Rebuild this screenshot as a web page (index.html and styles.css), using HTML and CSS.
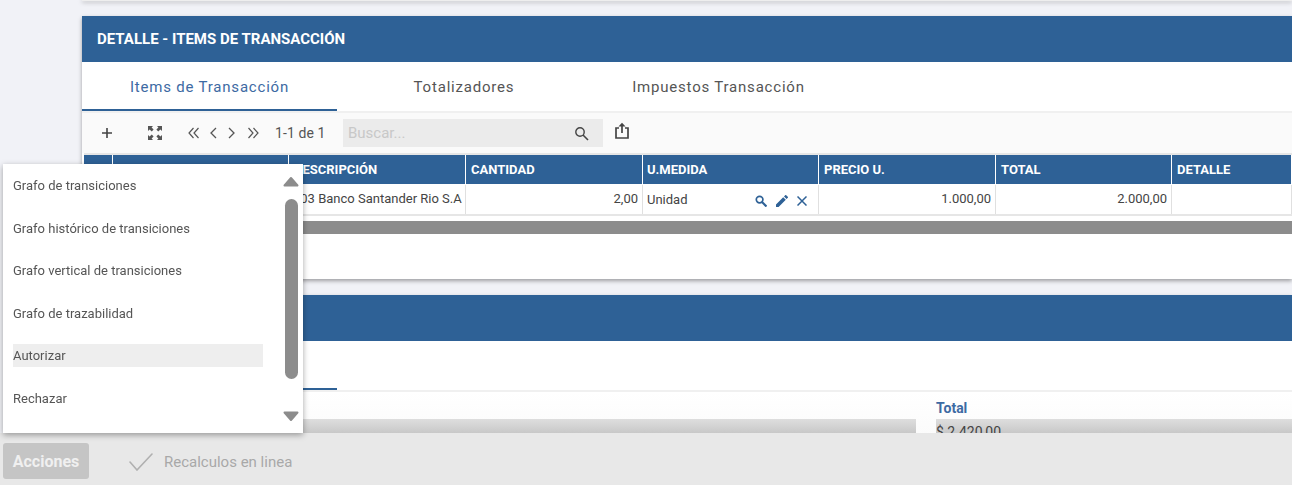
FILE: index.html
```html
<!DOCTYPE html>
<html lang="en">
<head>
    <meta charset="UTF-8">
    <title>Detalle de transacción</title>
    <link rel="stylesheet" href="styles.css">
</head>
<body>
    <div class="top-card"></div>
    <div class="content">
        <section class="panel first-panel">
            <h2 class="panel-title">DETALLE - ITEMS DE TRANSACCIÓN</h2>
            <div class="tabs">
                <a class="tab active">Items de Transacción</a>
                <a class="tab">Totalizadores</a>
                <a class="tab">Impuestos Transacción</a>
            </div>
            <div class="toolbar">
                <svg class="tool-add" width="12" height="12" viewBox="0 0 12 12"><path d="M6 1v10M1 6h10" stroke="#444" stroke-width="1.6" fill="none"/></svg>
                <svg class="tool-expand" width="16" height="16" viewBox="0 0 16 16"><path d="M1 6V1h5L4.600 2.400 6.600 4.600 4.800 6.400 2.600 4.400zM15 6V1h-5l1.400 1.400-2 2.200 1.800 1.800 2.200-2zM1 10v5h5l-1.400-1.400 2-2.200-1.800-1.800-2.200 2zM15 10v5h-5l1.400-1.400-2-2.200 1.800-1.800 2.200 2z" fill="#555"/></svg>
                <svg class="tool-first" width="12" height="12" viewBox="0 0 12 12"><path d="M5.500 1 1 6l4.500 5M10.500 1 6 6l4.500 5" stroke="#555" stroke-width="1.200" fill="none"/></svg>
                <svg class="tool-prev" width="8" height="12" viewBox="0 0 8 12"><path d="M7 1 2 6l5 5" stroke="#555" stroke-width="1.300" fill="none"/></svg>
                <svg class="tool-next" width="8" height="12" viewBox="0 0 8 12"><path d="M1 1l5 5-5 5" stroke="#555" stroke-width="1.300" fill="none"/></svg>
                <svg class="tool-last" width="12" height="12" viewBox="0 0 12 12"><path d="M1.500 1 6 6l-4.500 5M6.500 1 11 6l-4.500 5" stroke="#555" stroke-width="1.200" fill="none"/></svg>
                <span class="page-count">1-1 de 1</span>
                <div class="search">
                    <span>Buscar...</span>
                    <svg width="15" height="15" viewBox="0 0 15 15"><circle cx="6" cy="6" r="4.200" stroke="#444" stroke-width="1.400" fill="none"/><path d="M9 9l5 5" stroke="#444" stroke-width="1.600"/></svg>
                </div>
                <svg class="tool-share" width="14" height="17" viewBox="0 0 14 17"><path d="M4 6H1v10h12V6h-3" stroke="#444" stroke-width="1.700" fill="none"/><path d="M7 11V2" stroke="#444" stroke-width="1.700"/><path d="M3.500 4.500 7 .8l3.500 3.700z" fill="#444"/></svg>
            </div>
            <div class="grid-head">
                <div></div>
                <div></div>
                <div>DESCRIPCIÓN</div>
                <div>CANTIDAD</div>
                <div class="unit-head">U.MEDIDA</div>
                <div>PRECIO U.</div>
                <div>TOTAL</div>
                <div>DETALLE</div>
            </div>
            <div class="grid-row">
                <div></div>
                <div></div>
                <div class="clip">003 Banco Santander Rio S.A</div>
                <div class="num">2,00</div>
                <div class="unit-cell">
                    <span>Unidad</span>
                    <span class="row-icons">
                        <svg width="12" height="12" viewBox="0 0 12 12"><circle cx="4.600" cy="4.600" r="3.300" stroke="#2e6196" stroke-width="1.700" fill="none"/><path d="M7 7l4.500 4.500" stroke="#2e6196" stroke-width="2.200"/></svg>
                        <svg width="12" height="12" viewBox="0 0 12 12"><path d="M0 12V9.400L7.200 2.200l2.600 2.600L2.600 12zM8 1.400 9.200.2a.7.7 0 0 1 1 0l1.600 1.600a.7.7 0 0 1 0 1L10.600 4z" fill="#2e6196"/></svg>
                        <svg width="10" height="10" viewBox="0 0 10 10"><path d="M.5.5l9 9M9.500.5l-9 9" stroke="#2e6196" stroke-width="1.500"/></svg>
                    </span>
                </div>
                <div class="num">1.000,00</div>
                <div class="num">2.000,00</div>
                <div></div>
            </div>
            <div class="grid-scroll"></div>
        </section>

        <section class="panel second-panel">
            <div class="panel-title empty"></div>
            <div class="tabs">
                <a class="tab active"></a>
            </div>
            <div class="totals">
                <div class="total-col wide"><div class="total-field"></div></div>
                <div class="total-col">
                    <label>Total</label>
                    <div class="total-field">$ 2.420,00</div>
                </div>
            </div>
        </section>
    </div>

    <div class="bottom-bar">
        <button class="btn-actions">Acciones</button>
        <svg class="check" width="24" height="18" viewBox="0 0 24 18"><path d="M1 9l7 8L23 1" stroke="#b0b0b0" stroke-width="1.600" stroke-linecap="round" fill="none"/></svg>
        <span class="recalc">Recalculos en linea</span>
    </div>

    <div class="actions-menu">
        <ul class="menu-list">
            <li>Grafo de transiciones</li>
            <li>Grafo histórico de transiciones</li>
            <li>Grafo vertical de transiciones</li>
            <li>Grafo de trazabilidad</li>
            <li class="selected">Autorizar</li>
            <li>Rechazar</li>
        </ul>
        <div class="menu-scroll">
            <svg width="16" height="11" viewBox="0 0 16 11"><path d="M8 2 14.500 9.500H1.500z" fill="#8c8c8c" stroke="#8c8c8c" stroke-width="2" stroke-linejoin="round"/></svg>
            <div class="menu-thumb"></div>
            <svg width="16" height="11" viewBox="0 0 16 11"><path d="M8 9 14.500 1.500H1.500z" fill="#8c8c8c" stroke="#8c8c8c" stroke-width="2" stroke-linejoin="round"/></svg>
        </div>
    </div>
</body>
</html>
```

FILE: styles.css
```css
html, body {
    margin: 0;
    padding: 0;
    height: 485px;
    overflow: hidden;
}
body {
    font-family: Roboto, "Liberation Sans", sans-serif;
    background-color: #f1f2f7;
    color: #444;
    font-size: 13px;
}
.top-card {
    height: 1px;
    margin-left: 82px;
    background-color: #eee;
    box-shadow: 0 1px 4px rgba(0, 0, 0, 0.55);
}
.content {
    padding: 15px 0 0 82px;
    width: 1210px;
}
.panel {
    background-color: #fff;
    box-shadow: 0 2px 4px rgba(0, 0, 0, 0.35);
}
.first-panel {
    height: 263px;
    margin-bottom: 16px;
}
.panel-title {
    margin: 0;
    height: 46px;
    line-height: 46px;
    padding-left: 15px;
    background-color: #2e6196;
    color: #fff;
    font-size: 15px;
    font-weight: 700;
}
.tabs {
    display: flex;
    height: 48px;
    margin-top: 1px;
    border-bottom: 2px solid #f0f0f0;
}
.tab {
    width: 255px;
    height: 48px;
    line-height: 48px;
    text-align: center;
    font-size: 15px;
    letter-spacing: 0.8px;
    color: #555;
    box-sizing: border-box;
}
.tab:nth-child(2) {
    width: 254px;
}
.tab.active {
    color: #3d6aa3;
    border-bottom: 2px solid #2e6196;
}
.toolbar {
    display: flex;
    align-items: center;
    height: 40px;
    background-color: #fafafa;
    color: #555;
}
.tool-add { margin-left: 19px; }
.tool-expand { margin-left: 34px; }
.tool-first { margin-left: 25px; }
.tool-prev { margin-left: 9px; }
.tool-next { margin-left: 11px; }
.tool-last { margin-left: 11px; }
.page-count {
    width: 51px;
    margin-left: 16px;
    font-size: 14px;
    letter-spacing: 0.1px;
    white-space: nowrap;
}
.search {
    display: flex;
    align-items: center;
    justify-content: space-between;
    width: 260px;
    height: 28px;
    margin-left: 17px;
    padding: 0 14px 0 5px;
    box-sizing: border-box;
    background-color: #ebebeb;
    color: #c8c8c8;
    font-size: 15px;
}
.tool-share {
    margin: -5px 0 0 12px;
}
.grid-head, .grid-row {
    display: grid;
    grid-template-columns: 29px 176px 177px 177px 176px 177px 176px 120px;
    margin-left: 2px;
}
.grid-head {
    height: 30px;
    border-top: 2px solid #e6e6e6;
    background-color: #2e6196;
    color: #fff;
    font-size: 13px;
    font-weight: 700;
}
.grid-head div {
    line-height: 29px;
    padding-left: 5px;
    border-right: 1px solid #fff;
    box-sizing: border-box;
}
.grid-head .unit-head {
    padding-left: 4px;
}
.grid-row {
    height: 29px;
    border-top: 1px solid #fff;
    border-bottom: 2px solid #e6e6e6;
    margin-top: -1px;
}
.grid-row div {
    line-height: 28px;
    padding: 0 4px;
    border-right: 1px solid #e0e0e0;
    box-sizing: border-box;
    white-space: nowrap;
    overflow: hidden;
}
.grid-row .num {
    text-align: right;
}
.grid-row .unit-cell {
    display: flex;
    justify-content: space-between;
    align-items: center;
}
.row-icons {
    display: flex;
    align-items: center;
    gap: 9px;
    margin: 2px 7px 0 0;
}
.grid-scroll {
    height: 13px;
    margin-top: 5px;
    background-color: #8c8c8c;
}
.second-panel {
    height: 200px;
}
.totals {
    display: flex;
    gap: 20px;
    padding-top: 9px;
    background: linear-gradient(#fff, #fafafa);
}
.total-col {
    width: 356px;
}
.total-col.wide {
    width: 834px;
    padding-top: 18px;
}
.total-col label {
    display: block;
    height: 18px;
    line-height: 15px;
    font-size: 14px;
    font-weight: 700;
    color: #3d6aa3;
}
.total-field {
    height: 26px;
    line-height: 26px;
    background: linear-gradient(#dedede, #c8c8c8 54%);
    font-size: 14px;
}
.bottom-bar {
    position: fixed;
    left: 0;
    right: 0;
    bottom: 0;
    height: 52px;
    display: flex;
    align-items: center;
    background-color: #e8e8e8;
}
.btn-actions {
    width: 86px;
    height: 36px;
    margin: 4px 0 0 3px;
    border: none;
    border-radius: 3px;
    background-color: #c5c5c5;
    color: #f0f0f0;
    font-family: inherit;
    font-size: 16px;
    font-weight: 700;
}
.check {
    margin: 6px 0 0 40px;
}
.recalc {
    margin: 5px 0 0 11px;
    font-size: 15px;
    color: #a8a8a8;
}
.actions-menu {
    position: absolute;
    left: 3px;
    top: 164px;
    width: 300px;
    height: 269px;
    display: flex;
    background-color: #fff;
    box-shadow: 0 2px 6px rgba(0, 0, 0, 0.35);
}
.menu-list {
    list-style: none;
    margin: 0;
    padding: 0 0 0 10px;
    width: 250px;
}
.menu-list li {
    height: 23px;
    line-height: 23px;
    margin-top: 19.500px;
    color: #555;
}
.menu-list li:first-child {
    margin-top: 10px;
}
.menu-list li.selected {
    background-color: #eeeeee;
}
.menu-scroll {
    display: flex;
    flex-direction: column;
    align-items: center;
    width: 16px;
    margin-left: 20px;
    padding-top: 12px;
}
.menu-thumb {
    width: 13px;
    height: 180px;
    margin-top: 12px;
    border-radius: 7px;
    background-color: #8c8c8c;
}
.menu-scroll svg:last-child {
    margin-top: 32px;
}
```
